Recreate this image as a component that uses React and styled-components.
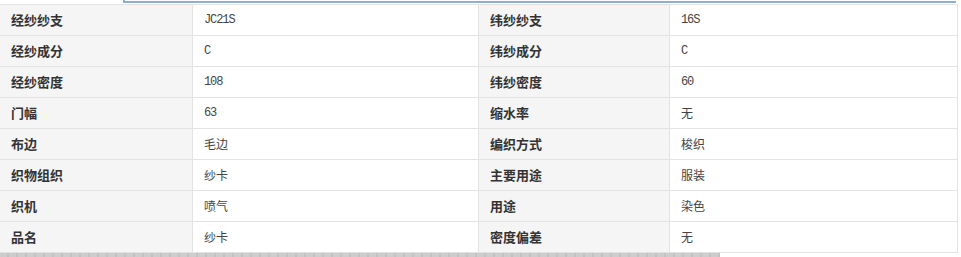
import React from "react";
import styled, { createGlobalStyle } from "styled-components";

const Global = createGlobalStyle`
  html, body { margin: 0; padding: 0; background: #fff; }
  body { font-family: "Noto Sans CJK SC", "Liberation Sans", sans-serif; overflow: hidden; }
`;

const Page = styled.div`
  width: 961px;
  height: 257px;
  display: flex;
  flex-direction: column;
`;

const PanelEdge = styled.div`
  margin-left: 123px;
  width: 831px;
  height: 1px;
  border-left: 2px solid #8eaed4;
  border-bottom: 2px solid #8eaed4;
  margin-bottom: 1px;
`;

const Table = styled.table`
  border-collapse: collapse;
  width: 958px;
  margin-left: -1px;
  table-layout: fixed;
`;

const Col = styled.col`
  width: ${(p) => p.$w}px;
`;

const Row = styled.tr`
  height: 31px;
`;

const Cell = styled.td`
  border: 1px solid #e3e3e3;
  height: 30px;
  padding: ${(p) => (p.$mono ? "1px 0 0 11px" : "0 0 0 11px")};
  box-sizing: border-box;
  vertical-align: middle;
  font-size: ${(p) => (p.$label ? "13px" : "12px")};
  letter-spacing: ${(p) => (p.$mono ? "-1.1px" : "0")};
  font-weight: ${(p) => (p.$label ? 700 : 400)};
  color: ${(p) => (p.$label ? "#333" : "#444")};
  background: ${(p) => (p.$label ? "#f5f5f5" : "#fff")};
  font-family: ${(p) =>
    p.$mono
      ? '"Liberation Mono", "DejaVu Sans Mono", monospace'
      : '"Noto Sans CJK SC", "Liberation Sans", sans-serif'};
  line-height: 1;
  white-space: nowrap;
`;

const BottomBar = styled.div`
  width: 720px;
  height: 5px;
  background: repeating-linear-gradient(
    90deg,
    #cdcdcd 0px,
    #cdcdcd 7px,
    #c2c2c2 7px,
    #c2c2c2 9px
  );
`;

const rows = [
  ["经纱纱支", "JC21S", "纬纱纱支", "16S"],
  ["经纱成分", "C", "纬纱成分", "C"],
  ["经纱密度", "108", "纬纱密度", "60"],
  ["门幅", "63", "缩水率", "无"],
  ["布边", "毛边", "编织方式", "梭织"],
  ["织物组织", "纱卡", "主要用途", "服装"],
  ["织机", "喷气", "用途", "染色"],
  ["品名", "纱卡", "密度偏差", "无"],
];

const isLatin = (s) => /^[A-Za-z0-9]+$/.test(s);

export default function App() {
  return (
    <>
      <Global />
      <Page>
        <PanelEdge />
        <Table>
          <colgroup>
            <Col $w={193} />
            <Col $w={286} />
            <Col $w={191} />
            <Col $w={288} />
          </colgroup>
          <tbody>
            {rows.map((r, i) => (
              <Row key={i}>
                <Cell $label>{r[0]}</Cell>
                <Cell $mono={isLatin(r[1])}>{r[1]}</Cell>
                <Cell $label>{r[2]}</Cell>
                <Cell $mono={isLatin(r[3])}>{r[3]}</Cell>
              </Row>
            ))}
          </tbody>
        </Table>
        <BottomBar />
      </Page>
    </>
  );
}
